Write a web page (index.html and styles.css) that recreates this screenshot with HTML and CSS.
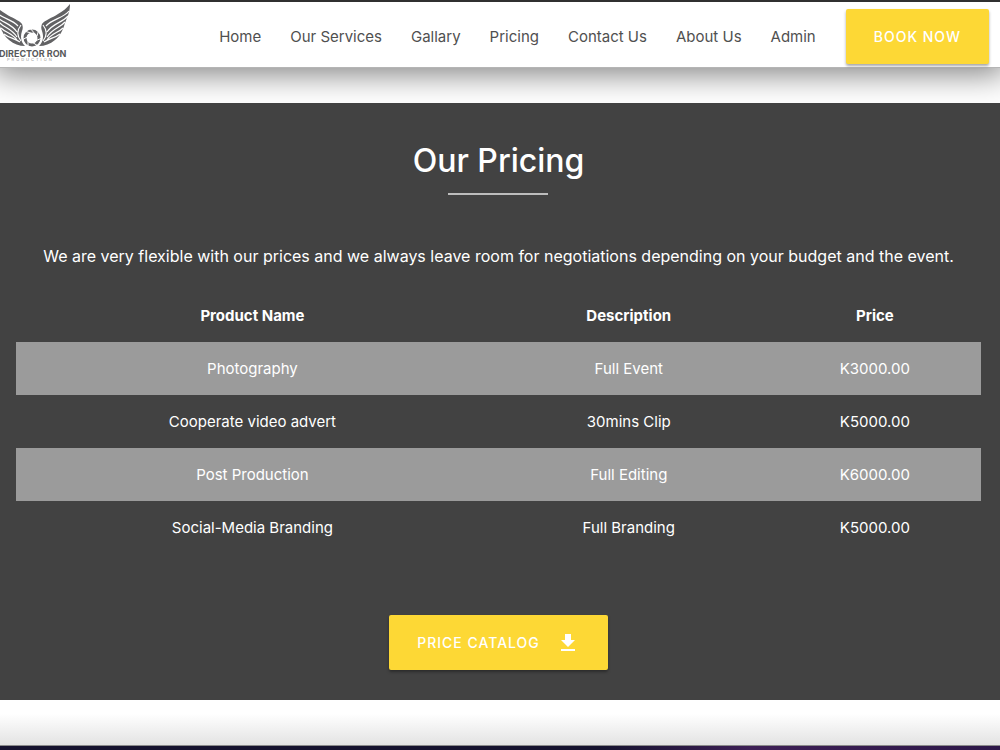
FILE: index.html
```html
<!DOCTYPE html>
<html lang="en">
<head>
<meta charset="utf-8">
<title>Director Ron Production</title>
<link rel="stylesheet" href="styles.css">
</head>
<body>
<header class="navbar">
  <a class="logo" href="#" aria-label="Director Ron">
    <svg width="72" height="60" viewBox="0 0 72 60">
      <g id="wing">
        <path fill="#626264" d="M70 1C70 9 67 15 65 20C63 27 60 33 55 37C50 41 45 43 39 43C43 39 44 34 42 28C41 26 41 23 42 21C45 17 52 15 58 11C63 8 67 5 70 1Z"/>
        <path fill="none" stroke="#fff" stroke-width="1.2" d="M69 8C64 15 52 16 46 23M68 13C62 20 53 20 47 29M65 19C60 25 53 25 47 34M63 25C58 30 52 30 47 37M60 31C55 35 50 35 44 39M43 22C47 27 47 33 43 38"/>
      </g>
      <use href="#wing" transform="translate(64 0) scale(-1 1)"/>
      <circle cx="32" cy="35" r="10" fill="#fff"/>
      <circle cx="32" cy="35" r="7" fill="none" stroke="#626264" stroke-width="3"/>
      <path d="M30 25L35 31M39 26L37 33M42 35L35 38M38 43L32 39M28 44L28 37M22 37L29 33M24 28L31 30" stroke="#fff" stroke-width="1"/>
      <text class="logo-name" x="-1" y="54">DIRECTOR RON</text>
      <text class="logo-sub" x="7" y="58">PRODUCTION</text>
    </svg>
  </a>
  <nav class="links">
    <a href="#">Home</a>
    <a href="#">Our Services</a>
    <a href="#">Gallary</a>
    <a href="#">Pricing</a>
    <a href="#">Contact Us</a>
    <a href="#">About Us</a>
    <a href="#">Admin</a>
  </nav>
  <button class="btn" type="button">BOOK NOW</button>
</header>
<main class="pricing">
  <h1 class="title">Our Pricing</h1>
  <p class="intro">We are very flexible with our prices and we always leave room for negotiations depending on your budget and the event.</p>
  <table class="prices">
    <colgroup><col class="col-name"><col class="col-desc"><col class="col-price"></colgroup>
    <thead>
      <tr><th scope="col">Product Name</th><th scope="col">Description</th><th scope="col">Price</th></tr>
    </thead>
    <tbody>
      <tr><td>Photography</td><td>Full Event</td><td>K3000.00</td></tr>
      <tr><td>Cooperate video advert</td><td>30mins Clip</td><td>K5000.00</td></tr>
      <tr><td>Post Production</td><td>Full Editing</td><td>K6000.00</td></tr>
      <tr><td>Social-Media Branding</td><td>Full Branding</td><td>K5000.00</td></tr>
    </tbody>
  </table>
  <button class="btn" type="button">PRICE CATALOG
    <svg width="24" height="24" viewBox="0 0 24 24" fill="#fff"><path d="M19 9h-4V3H9v6H5l7 7 7-7zM5 18v2h14v-2H5z"/></svg>
  </button>
</main>
<footer class="page-end"></footer>
</body>
</html>
```
FILE: styles.css
```css
* {
  box-sizing: border-box;
}

body {
  margin: 0;
  min-height: 100vh;
  display: flex;
  flex-direction: column;
  overflow-x: hidden;
  background: #fff;
  color: #fff;
  font-family: Inter, "Liberation Sans", sans-serif;
  font-size: 15px;
}

.navbar {
  display: flex;
  align-items: center;
  height: 68px;
  padding-right: 11px;
  border-top: 2px solid #303030;
  border-bottom: 1px solid #b5b5b5;
  background: #fff;
  box-shadow: 0 0 32px 6px rgba(0, 0, 0, 0.5);
}

.logo {
  display: flex;
  align-self: flex-start;
  padding-top: 1px;
}

.logo-name {
  fill: #58585a;
  font-size: 9px;
  font-weight: 700;
}

.logo-sub {
  fill: #999;
  font-size: 4px;
  letter-spacing: 2px;
}

.links {
  display: flex;
  gap: 29px;
  margin: 3px 30px 0 auto;
}

.links a {
  color: #505050;
  text-decoration: none;
  white-space: nowrap;
}

.btn {
  display: flex;
  align-items: center;
  gap: 16px;
  height: 55px;
  padding: 0 28px;
  border: 0;
  border-radius: 2px;
  background: #fdd835;
  color: #fff;
  font: inherit;
  font-size: 14px;
  font-weight: 500;
  letter-spacing: 1px;
  box-shadow: 0 2px 3px rgba(0, 0, 0, 0.35);
}

.navbar .btn {
  margin-top: 3px;
}

.pricing {
  display: flex;
  flex-direction: column;
  align-items: center;
  margin-top: 35px;
  padding: 36px 19px 30px 16px;
  background: #424242;
}

.title {
  margin: 0;
  font-size: 32px;
  font-weight: 500;
  line-height: 44px;
  text-align: center;
}

.title::after {
  content: "";
  display: block;
  width: 100px;
  height: 2px;
  margin: 10px auto 0;
  background: #bdbdbd;
}

.intro {
  margin: 48px 0 20px;
  font-size: 16px;
  line-height: 26px;
  text-align: center;
}

.prices {
  width: 100%;
  table-layout: fixed;
  border-collapse: collapse;
  text-align: center;
}

.col-name {
  width: 49%;
}

.col-desc {
  width: 29%;
}

.col-price {
  width: 22%;
}

.prices th,
.prices td {
  height: 53px;
  padding: 0;
}

.prices th {
  font-weight: 700;
}

.prices tbody tr:nth-child(odd) {
  background: #9b9b9b;
}

.pricing .btn {
  margin-top: 61px;
}

.page-end {
  flex: 1;
  min-height: 50px;
  border-bottom: 5px solid;
  border-image: linear-gradient(to right, #15122e 60%, #3d1f55 75%, #2c1748) 1;
  background: linear-gradient(#fff 30%, #e2e2e2);
}

.page-end::after {
  content: "";
  display: block;
  height: 100%;
  min-height: 45px;
  border-bottom: 1px solid #8a8a8a;
}
```
